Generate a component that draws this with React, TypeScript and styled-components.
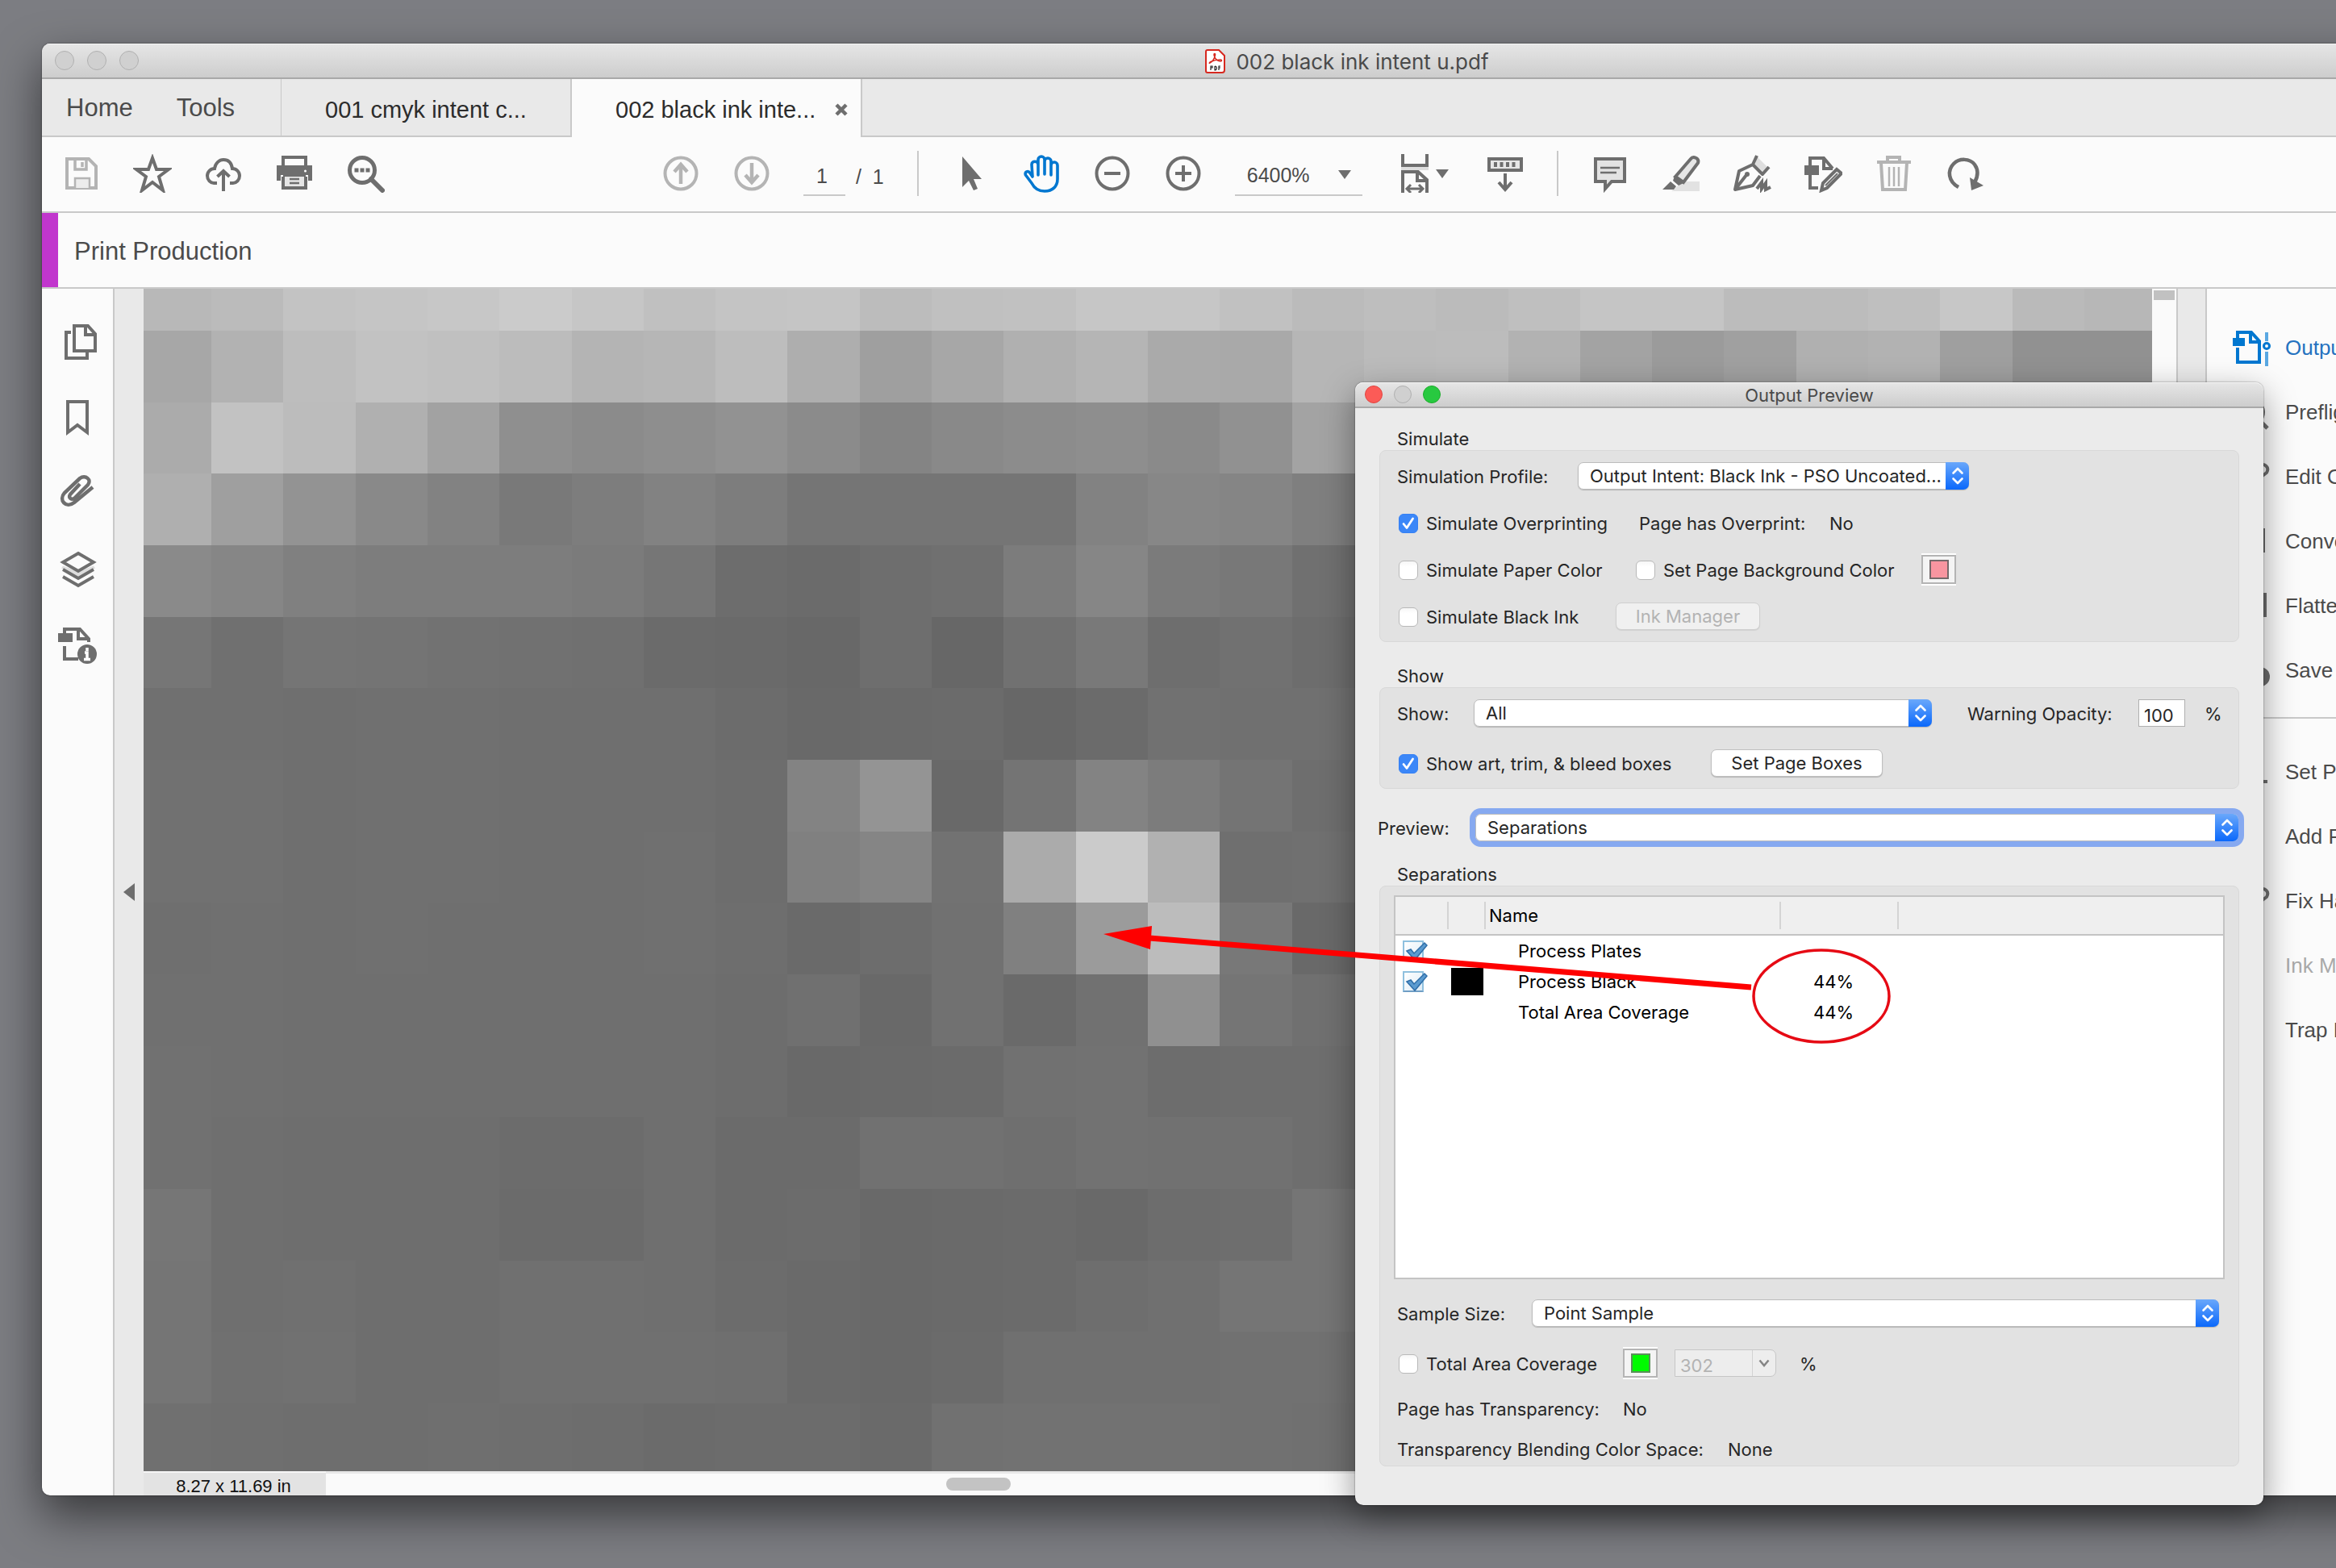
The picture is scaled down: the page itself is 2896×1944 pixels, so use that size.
import React from "react";
import styled, { createGlobalStyle, css } from "styled-components";

const ui = `Inter, Roboto, "Liberation Sans", sans-serif`;
const helv = `"Liberation Sans", Arial, sans-serif`;
const ink = "#6e6e6e";
const faded = "#b4b4b4";
const accent = "#0077d0";
const line = "#c9c9c9";

const GlobalStyle = createGlobalStyle`
  *, *::before, *::after { box-sizing: border-box; }
  html, body { margin: 0; padding: 0; overflow: hidden; }
  body { font-family: ${ui}; background: #7c7d82; }
  button, input, select { font: inherit; color: inherit; margin: 0; }
`;

/* ---------- desktop and main window ---------- */

const Desktop = styled.div`
  position: relative;
  display: flex;
  height: 100vh;
  padding: 54px 0 90px 52px;
  overflow: hidden;
  background: #7c7d82;
`;

/* The window runs on past the right edge of the screen. */
const Window = styled.main`
  flex: 1;
  min-width: 0;
  margin-right: -392px;
  display: flex;
  flex-direction: column;
  border-radius: 10px;
  overflow: hidden;
  background: #fbfbfb;
  box-shadow: 0 0 2px rgba(0, 0, 0, 0.6), 0 24px 56px rgba(0, 0, 0, 0.55);
`;

const TitleBar = styled.header`
  position: relative;
  flex: none;
  display: flex;
  align-items: center;
  justify-content: center;
  gap: 13px;
  height: 44px;
  padding-top: 2px;
  background: linear-gradient(#e6e6e6, #cdcdcd);
  border-bottom: 2px solid #a9a9a9;
  box-shadow: inset 0 1px 0 #f4f4f4;
  color: #4a4a4a;
  font-size: 26px;
`;

const Lights = styled.div<{ $left: number; $gap: number }>`
  position: absolute;
  left: ${(p) => p.$left}px;
  top: 0;
  bottom: 0;
  display: flex;
  align-items: center;
  gap: ${(p) => p.$gap}px;
`;

const Light = styled.button<{ $fill?: string; $edge?: string; $size: number }>`
  width: ${(p) => p.$size}px;
  height: ${(p) => p.$size}px;
  padding: 0;
  border-radius: 50%;
  background: ${(p) => p.$fill || "#d0d0d0"};
  border: 1px solid ${(p) => p.$edge || "#b0b0b0"};
`;

const Tabs = styled.nav`
  flex: none;
  display: flex;
  height: 72px;
  background: #e9e9e9;
`;

const tabEdge = css`
  border-bottom: 2px solid ${line};
`;

const HomeTabs = styled.div`
  ${tabEdge}
  display: flex;
  align-items: center;
  gap: 54px;
  width: 297px;
  padding: 2px 0 0 30px;
  border-right: 1px solid ${line};
`;

const PlainTab = styled.button`
  border: 0;
  padding: 0;
  background: none;
  color: #4b4b4b;
  font: 31px/36px ${helv};
`;

const DocTab = styled.div<{ $active?: boolean }>`
  display: flex;
  align-items: center;
  gap: 24px;
  width: 360px;
  padding: 6px 0 0 54px;
  border-right: 2px solid ${line};
  ${(p) => (p.$active ? "background: #fbfbfb; padding-bottom: 2px;" : tabEdge)}
`;

const DocTabName = styled.button`
  border: 0;
  padding: 0;
  background: none;
  color: #2c2c2c;
  white-space: nowrap;
  font: 29px/34px ${helv};
`;

const CloseTab = styled.button`
  display: flex;
  border: 0;
  padding: 0;
  background: none;
`;

const TabFiller = styled.div`
  ${tabEdge}
  flex: 1;
`;

/* ---------- toolbar ---------- */

const Toolbar = styled.div`
  flex: none;
  display: flex;
  align-items: center;
  height: 94px;
  padding: 0 0 2px 5px;
  border-bottom: 2px solid ${line};
  background: #fbfbfb;
  color: #4b4b4b;
  font: 25px/30px ${helv};
`;

const ToolGroup = styled.div<{ $ml?: number }>`
  display: flex;
  align-items: center;
  margin-left: ${(p) => p.$ml || 0}px;
`;

const Tool = styled.button<{ $tone?: string; $w?: number }>`
  display: flex;
  align-items: center;
  justify-content: center;
  gap: 8px;
  width: ${(p) => p.$w || 88}px;
  height: 88px;
  padding: 0;
  border: 0;
  background: none;
  color: ${(p) => p.$tone || ink};
`;

const Divider = styled.span<{ $ml: number }>`
  width: 2px;
  height: 56px;
  margin: 0 20px 0 ${(p) => p.$ml}px;
  background: ${line};
`;

const underlined = css`
  height: 56px;
  border: 0;
  border-bottom: 2px solid ${line};
  border-radius: 0;
  background: none;
  outline: none;
`;

const PageInput = styled.input`
  ${underlined}
  width: 52px;
  padding: 8px 6px 0 0;
  text-align: center;
`;

const PageCount = styled.span`
  margin-left: 13px;
  padding-top: 8px;
`;

const ZoomBox = styled.div`
  position: relative;
  margin-left: 20px;
  display: flex;
  align-items: center;
`;

const ZoomSelect = styled.select`
  ${underlined}
  appearance: none;
  width: 158px;
  padding: 6px 0 0 15px;
`;

const OverCaret = styled.span`
  position: absolute;
  right: 14px;
  top: 24px;
  display: flex;
  color: ${ink};
  pointer-events: none;
`;

const Production = styled.section`
  flex: none;
  display: flex;
  align-items: center;
  height: 94px;
  padding: 2px 0 0 20px;
  border-left: 20px solid #c136cd;
  position: relative;
  color: #4b4b4b;
  &::after {
    content: "";
    position: absolute;
    left: -20px;
    right: 0;
    bottom: 0;
    height: 2px;
    background: ${line};
  }
`;

const ProductionTitle = styled.h1`
  margin: 0;
  font: 400 31px/36px ${helv};
`;

/* ---------- work area ---------- */

const Work = styled.div`
  flex: 1;
  min-height: 0;
  display: flex;
`;

const Rail = styled.aside`
  flex: none;
  width: 90px;
  padding: 19px 2px 0 0;
  border-right: 2px solid ${line};
`;

const RailButton = styled.button`
  display: flex;
  align-items: center;
  justify-content: center;
  width: 88px;
  height: 94px;
  padding: 0;
  border: 0;
  background: none;
  color: ${ink};
`;

const Gutter = styled.button`
  flex: none;
  display: flex;
  align-items: center;
  justify-content: center;
  width: 36px;
  padding: 0;
  border: 0;
  background: #e9e9e9;
  color: ${ink};
`;

const Doc = styled.section`
  flex: 1;
  min-width: 0;
  display: flex;
  flex-direction: column;
`;

const Pixels = styled.div`
  flex: 1;
  min-height: 0;
  display: grid;
  grid-template-columns: 84px repeat(26, 1fr) 84px;
  grid-template-rows: 52px repeat(15, 1fr) 84px;
`;

const Status = styled.footer`
  flex: none;
  display: flex;
  height: 30px;
`;

const PageSize = styled.span`
  width: 226px;
  padding: 4px 3px 0 0;
  border-top: 2px solid #f6f6f6;
  text-align: center;
  background: #e3e3e3;
  color: #111;
  font: 22px/26px ${helv};
`;

const Track = styled.div`
  flex: 1;
  padding: 5px 0 0 769px;
  border-top: 3px solid #e8e8e8;
  background: #fafafa;
`;

const Thumb = styled.div`
  width: 80px;
  height: 16px;
  border-radius: 8px;
  background: #c3c3c3;
`;

const VScroll = styled.div`
  flex: none;
  width: 32px;
  padding: 2px;
  border-right: 2px solid ${line};
  background: #fafafa;
`;

const VThumb = styled.div`
  width: 26px;
  height: 12px;
  background: #c1c1c1;
`;

const RightGap = styled.div`
  flex: none;
  width: 36px;
  background: #e9e9e9;
  border-right: 2px solid ${line};
`;

const ToolPanel = styled.aside`
  flex: none;
  width: 552px;
  padding-top: 33px;
`;

const PanelItem = styled.button<{ $tone?: string; $iconTone?: string }>`
  display: flex;
  align-items: center;
  gap: 18px;
  width: 100%;
  height: 80px;
  padding: 0 0 0 31px;
  border: 0;
  background: none;
  text-align: left;
  white-space: nowrap;
  color: ${(p) => p.$tone || "#4b4b4b"};
  font: 26px/30px ${helv};
  svg {
    color: ${(p) => p.$iconTone || ink};
  }
`;

const PanelRule = styled.hr`
  height: 2px;
  margin: 18px 0 26px;
  border: 0;
  background: ${line};
`;

/* ---------- Output Preview dialog ---------- */

const Dialog = styled.section`
  position: absolute;
  top: 474px;
  right: 90px;
  width: 1126px;
  border-radius: 10px;
  background: #ebebeb;
  color: #262626;
  font: 22px/26px ${ui};
  box-shadow: 0 0 2px rgba(0, 0, 0, 0.55), 0 14px 40px rgba(0, 0, 0, 0.4);
`;

const DialogTitle = styled(TitleBar)`
  height: 32px;
  border-radius: 10px 10px 0 0;
  font-size: 22px;
`;

const Body = styled.div`
  padding: 0 30px 48px;
`;

const Group = styled.fieldset<{ $top: number }>`
  margin: ${(p) => p.$top}px 0 0;
  padding: 0;
  border: 0;
  min-width: 0;
`;

const Legend = styled.legend`
  height: 27px;
  padding: 0 0 0 22px;
`;

const Box = styled.div<{ $gap: number; $bottom: number }>`
  display: flex;
  flex-direction: column;
  gap: ${(p) => p.$gap}px;
  padding: 11px 21px ${(p) => p.$bottom}px;
  border: 1px solid #d8d8d8;
  border-radius: 8px;
  background: #e2e2e2;
`;

const Row = styled.div`
  display: flex;
  align-items: center;
  height: 40px;
`;

/* Starts a little left of the groups above and below it. */
const PreviewRow = styled(Row)`
  margin: 28px 1px 0 -2px;
`;

const SampleRow = styled(Row)`
  padding-right: 3px;
`;

const TextRow = styled(Row)`
  height: 28px;
`;

const FieldLabel = styled.label<{ $w: number; $ml?: number }>`
  flex: none;
  width: ${(p) => p.$w}px;
  margin-left: ${(p) => p.$ml || 0}px;
  padding-top: 2px;
`;

const CheckLabel = styled.label<{ $w: number }>`
  flex: none;
  display: flex;
  align-items: center;
  gap: 10px;
  width: ${(p) => p.$w}px;
  padding: 2px 0 0 2px;
`;

const CheckWrap = styled.span`
  position: relative;
  display: flex;
  svg {
    position: absolute;
    inset: 0;
    pointer-events: none;
    overflow: visible;
  }
`;

const CheckInput = styled.input`
  appearance: none;
  width: 24px;
  height: 24px;
  border: 1px solid #b9b9b9;
  border-radius: 6px;
  background: linear-gradient(#f6f6f6, #fff 30%);
  &:checked {
    border-color: #3580f4;
    background: #3b87f8;
  }
`;

const PopupWrap = styled.span<{ $w?: number; $focus?: boolean }>`
  position: relative;
  display: flex;
  ${(p) => (p.$w ? `flex: none; width: ${p.$w}px;` : "flex: 1;")}
  height: 34px;
  border-radius: 7px;
  box-shadow: ${(p) => (p.$focus ? "0 0 0 7px #86a9f0" : "0 1px 1px rgba(0, 0, 0, 0.2)")};
`;

const Popup = styled.select`
  appearance: none;
  width: 100%;
  height: 34px;
  padding: 0 30px 0 14px;
  border: 1px solid #bcbcbc;
  border-radius: 7px;
  background: #fff;
  outline: none;
`;

const Stepper = styled.span`
  position: absolute;
  top: 0;
  right: 0;
  display: flex;
  align-items: center;
  justify-content: center;
  width: 29px;
  height: 34px;
  border-radius: 0 7px 7px 0;
  background: linear-gradient(#6aa8fb, #0a68fb);
  pointer-events: none;
`;

const PushButton = styled.button<{ $w: number }>`
  width: ${(p) => p.$w}px;
  height: 34px;
  padding: 0;
  border: 1px solid #c0c0c0;
  border-radius: 7px;
  background: #fff;
  box-shadow: 0 1px 1px rgba(0, 0, 0, 0.2);
  &:disabled {
    background: #f0f0f0;
    border-color: #cfcfcf;
    color: #b3b3b3;
    box-shadow: 0 1px 1px rgba(0, 0, 0, 0.08);
  }
`;

const Swatch = styled.button<{ $fill: string; $edge: string }>`
  display: flex;
  align-items: center;
  justify-content: center;
  width: 43px;
  height: 36px;
  padding: 0;
  border: 2px solid #b4b4b4;
  box-shadow: 0 -2px 0 #fff, 0 2px 0 #fff;
  background: #f4f4f4;
  &::before {
    content: "";
    width: 24px;
    height: 24px;
    border: 2px solid ${(p) => p.$edge};
    background: ${(p) => p.$fill};
  }
`;

const NumberInput = styled.input`
  width: 58px;
  height: 34px;
  margin-right: 24px;
  padding: 5px 0 0 6px;
  border: 1px solid #b0b0b0;
  background: #fff;
  outline: none;
`;

const Combo = styled.span`
  display: flex;
  width: 126px;
  height: 34px;
  margin: 0 29px 0 21px;
  border: 1px solid #c6c6c6;
  border-radius: 0 7px 7px 0;
  background: #ededed;
  color: #b3b3b3;
`;

const ComboInput = styled.input`
  width: 96px;
  padding: 5px 0 0 6px;
  border: 0;
  border-right: 1px solid #d2d2d2;
  background: none;
  color: #b3b3b3;
`;

const ComboButton = styled.button`
  flex: 1;
  display: flex;
  align-items: center;
  justify-content: center;
  padding: 0;
  border: 0;
  background: none;
  color: #858585;
`;

const TableBox = styled.div`
  min-height: 476px;
  margin: 0 -4px;
  border: 2px solid #c4c4c4;
  background: #fff;
  color: #000;
`;

const Plates = styled.table`
  width: 100%;
  border-collapse: separate;
  border-spacing: 0;
  table-layout: fixed;
  th {
    height: 48px;
    padding: 6px 0;
    font-weight: 400;
    text-align: left;
    background: #efefef;
    border-bottom: 2px solid #c4c4c4;
  }
  td {
    height: 38px;
    padding: 0;
  }
`;

const HeadCell = styled.span<{ $last?: boolean }>`
  display: flex;
  align-items: center;
  height: 34px;
  padding-left: 4px;
  border-right: ${(p) => (p.$last ? "0" : "2px solid #d4d4d4")};
`;

const PlateText = styled.span`
  display: block;
  padding-left: 40px;
`;

const PlateTick = styled(CheckWrap)`
  width: 26px;
  margin-left: 9px;
`;

const PlateInput = styled.input`
  appearance: none;
  width: 26px;
  height: 26px;
  border: 2px solid #8fc0de;
  border-bottom-color: #6f9dc4;
  background: linear-gradient(135deg, #fff, #dcebf6);
`;

const InkSwatch = styled.span`
  display: block;
  width: 40px;
  height: 34px;
  margin-left: 3px;
  background: #000;
`;

const Marks = styled.svg`
  position: absolute;
  left: -320px;
  top: 660px;
  width: 1000px;
  height: 180px;
  pointer-events: none;
`;

/* ---------- drawings ---------- */

const IconSvg = styled.svg`
  flex: none;
`;

const Icon = ({ children, w = 48 }: { children: React.ReactNode; w?: number }) => (
  <IconSvg
    width={w}
    height={48}
    viewBox={`0 0 ${w} 48`}
    fill="none"
    stroke="currentColor"
    strokeWidth={4}
    aria-hidden="true"
  >
    {children}
  </IconSvg>
);

const Caret = () => (
  <svg width="16" height="11" viewBox="0 0 16 11" aria-hidden="true">
    <path d="M0 0h16l-8 11z" fill="currentColor" />
  </svg>
);

const Tick = () => (
  <svg width="24" height="24" viewBox="0 0 24 24" fill="none" aria-hidden="true">
    <path d="M6 12.5l4 5L17.5 6" stroke="#fff" strokeWidth="2.8" strokeLinecap="round" strokeLinejoin="round" />
  </svg>
);

const BlueTick = () => (
  <svg width="26" height="26" viewBox="0 0 26 26" fill="none" aria-hidden="true">
    <path d="M5 13l5-2 4 5L27 3l3 3-15 18z" fill="#5b9bd0" stroke="#2f6ea8" strokeWidth="1.5" />
  </svg>
);

const Arrows = () => (
  <svg width="16" height="24" viewBox="0 0 16 24" fill="none" stroke="#fff" strokeWidth="2.6" aria-hidden="true">
    <path d="M2.500 8.500L8 3l5.500 5.500M2.500 15.500L8 21l5.500-5.500" strokeLinecap="round" strokeLinejoin="round" />
  </svg>
);

const PdfIcon = () => (
  <svg width="25" height="30" viewBox="0 0 25 30" fill="none" aria-hidden="true">
    <path d="M3 1h14l7 7v18a3 3 0 0 1-3 3H3a2 2 0 0 1-2-2V3a2 2 0 0 1 2-2z" fill="#fff" stroke="#d6281f" strokeWidth="2" />
    <path
      d="M6 17c3-1 6-6 6.500-10 .2-2-1.500-2-1.500 0 .5 4 4 8 8 8 2 0 2-2 0-2-4 0-9 1-12 2.500-2 1-2 2.500-1 1.500z"
      stroke="#d6281f"
      strokeWidth="1.600"
    />
    <path d="M7 26v-5h2v2H7M12 21v5c3 0 3-5 0-5M17 26v-5h2M17 23h2" stroke="#222" strokeWidth="1.200" />
  </svg>
);

const SaveIcon = () => (
  <Icon>
    <path d="M6 6h27l9 9v27H6z" />
    <path d="M16 6v13h14V6M25 10v6" strokeWidth="3.500" />
    <path d="M16 42V30h18v12" fill="#ececec" strokeWidth="2.500" />
  </Icon>
);
const StarIcon = () => (
  <Icon>
    <path d="M24 5l5 14h15L32 28l5 17-13-10-13 10 5-17L4 19h15z" />
  </Icon>
);
const CloudIcon = () => (
  <Icon>
    <path d="M16 36h-4c-4 0-8-4-8-9s4-9 9-9c1-7 6-11 11-11 6 0 10 4 11 11 5 0 9 4 9 9s-4 9-8 9h-4" />
    <path d="M24 46V24M16.500 28l7.500-7 7.500 7" />
  </Icon>
);
const PrintIcon = () => (
  <Icon>
    <path d="M10 16V4h28v12" />
    <path d="M2 14h44v19h-5V26H7v7H2z" fill="currentColor" stroke="none" />
    <path d="M10 28v14h28V28" fill="#e6e6e6" />
    <path d="M10 26h28" />
    <path d="M18 31h12M18 36h12" strokeWidth="2.500" />
    <circle cx="37.500" cy="21" r="1.500" fill="#fff" stroke="none" />
  </Icon>
);
const SearchIcon = () => (
  <Icon>
    <circle cx="20" cy="20" r="15.500" strokeWidth="5" />
    <path d="M31 31l14 14" strokeWidth="6" strokeLinecap="round" />
    <path d="M10.500 20h5M17.500 20h5M24.500 20h5" strokeWidth="5" />
  </Icon>
);
const CircleIcon = ({ d, w = 4 }: { d: string; w?: number }) => (
  <Icon>
    <circle cx="24" cy="24" r="19.500" />
    <path d={d} strokeWidth={w} />
  </Icon>
);
const PointerIcon = () => (
  <Icon>
    <path d="M14 3v38l8-8 6 12 5-2-5-12h10z" fill="currentColor" stroke="none" />
  </Icon>
);
const HandIcon = () => (
  <Icon>
    <path
      strokeLinejoin="round"
      strokeLinecap="round"
      strokeWidth="3.600"
      d="M20 26V13M20 13V7a4 4 0 0 1 8 0v18M28 9a4 4 0 0 1 8 0v17M36 14a4 4 0 0 1 8 0v17c0 9-6 15-16 15-8 0-13-4-16-10L4.500 26c-1.500-4 3-6 5.500-2.500l3 4.500-1-15c0-5 8-5 8 0"
    />
  </Icon>
);
const FitIcon = () => (
  <Icon w={36}>
    <path d="M3 0v14h30V0" />
    <path d="M1 18h34" stroke="#dedede" />
    <path d="M3 48V22h19l11 10v16M21 22v11h11" />
    <path d="M9 43h18M13 38l-5 5 5 5M23 38l5 5-5 5" strokeWidth="3" />
  </Icon>
);
const KeyboardIcon = () => (
  <Icon>
    <rect x="4" y="6" width="40" height="14" fill="#e6e6e6" />
    <path d="M10 13h28" strokeWidth="6" strokeDasharray="4 3.500" />
    <path d="M24 24v20M16 35l8 9 8-9" />
  </Icon>
);
const CommentIcon = () => (
  <Icon>
    <path d="M6 6h36v28H26l-8 9v-9H6z" fill="#e3e3e3" />
    <path d="M12 17h24M12 23h20" strokeWidth="2.500" />
  </Icon>
);
const MarkerIcon = () => (
  <Icon>
    <path d="M22 38l4-4h21v12H12z" fill="#e2e2e2" stroke="none" />
    <path d="M17 28L36 6c3-4 11-1 9 5L27 35z" fill="#e6e6e6" />
    <path d="M16 27l11 9-6 3-7-6zM11 34l7 6-3 4H1z" fill="currentColor" stroke="none" />
  </Icon>
);
const PenIcon = () => (
  <Icon>
    <path d="M30 3l14 14-6 5-10-9z" fill="#dedede" stroke="none" />
    <path d="M30 2l-5 11 12 12 8-9M25 13L8 21 3 44l22-5 9-12M3 44l14-18" strokeLinejoin="round" />
    <circle cx="18" cy="25" r="3" fill="currentColor" stroke="none" />
    <path d="M30 43l6-8v8l5-7v8l6-3" />
  </Icon>
);
const DocPenIcon = () => (
  <Icon>
    <path d="M8 14V5h17l11 13M25 5v13h11M8 26v16h10" />
    <rect x="1" y="14" width="18" height="12" fill="currentColor" stroke="none" />
    <path d="M22 45l2-9 17-17 6 5-18 18z" fill="#fbfbfb" strokeWidth="4" />
    <path d="M27 39l15-15" strokeWidth="2" />
  </Icon>
);
const TrashIcon = () => (
  <Icon>
    <path d="M3 10h42M16 9V4h15v5M8 11l2 33h28l2-33" />
    <path d="M18 16v24M24 16v24M30 16v24" strokeWidth="2.500" />
  </Icon>
);
const RedoIcon = () => (
  <Icon>
    <path d="M16 41C3 34 2 20 10 12c7-7 20-7 26 1 5 7 4 15 0 22" strokeWidth="4.500" />
    <path d="M30 29l17 10-15 6z" fill="currentColor" stroke="none" />
  </Icon>
);

const PagesIcon = () => (
  <Icon>
    <path d="M16 12h-6v32h26v-7" />
    <path d="M20 4h17l9 10v21H20z" fill="#fbfbfb" />
    <path d="M34 4v11h12" />
  </Icon>
);
const BookmarkIcon = () => (
  <Icon>
    <path d="M12 4h24v38l-12-9-12 9z" />
  </Icon>
);
const ClipIcon = () => (
  <Icon>
    <path d="M27 12L15 25c-3 4 2 8 6 4l16-16c5-6-3-13-10-8L8 23c-8 9 2 20 12 12l23-19" strokeWidth="4.500" />
  </Icon>
);
const LayersIcon = () => (
  <Icon>
    <path d="M25 26.500l19-7 2 3-21 12-21-12 2-3z" fill="#dedede" stroke="none" />
    <path d="M25 4l19 11-19 11L6 15zM6 24l19 11 19-11M6 33l19 11 19-11" strokeWidth="3.800" />
  </Icon>
);
const InfoDocIcon = () => (
  <Icon>
    <path d="M8 10V4h19l11 12v4M25 4v12h13M8 25v16h17" />
    <rect x="0" y="9" width="18" height="11" fill="currentColor" stroke="none" />
    <circle cx="36" cy="35" r="12" fill="currentColor" stroke="none" />
    <path d="M36 27v4M33 33h3v8M32 41.500h8" stroke="#fff" strokeWidth="3.500" />
  </Icon>
);
const OutputIcon = () => (
  <Icon>
    <path d="M7 12V5h17l10 11v26H7V24M23 5v12h11" />
    <rect x="1" y="12" width="15" height="10" fill="currentColor" stroke="none" />
    <path d="M43 5v11M43 29v18" stroke="#5aa8e2" />
    <circle cx="43" cy="22" r="3.500" strokeWidth="3" />
  </Icon>
);
const LensIcon = () => (
  <Icon>
    <circle cx="24" cy="24" r="15" />
    <path d="M34 34l10 10" strokeWidth="5" />
  </Icon>
);
const PencilIcon = () => (
  <Icon>
    <path d="M8 40l3-12 24-18c5-3 12 2 8 9L18 38z" />
  </Icon>
);
const SheetIcon = ({ w = 36 }: { w?: number }) => (
  <Icon>
    <rect x="4" y="10" width={w} height="26" />
  </Icon>
);
const DiscIcon = () => (
  <Icon>
    <circle cx="35" cy="32" r="12" fill="currentColor" stroke="none" />
    <path d="M6 4h24v14M6 4v36h14" />
  </Icon>
);
const CropIcon = () => (
  <Icon>
    <path d="M10 2v34h34M2 10h28v34" />
  </Icon>
);

/* ---------- magnified page samples, one grey level per source pixel ---------- */

const samples = [
  "b8 bb c3 c5 c7 cb c6 c0 c4 c5 bc c0 c1 c6 c6 c1 bb be bb bf c5 c5 bc bc bf c7 ba b7",
  "a7 b2 bd c2 c0 bc b4 b6 bd ae 9f a7 b0 b5 aa a9 b6 bb bc b2 a3 9b a0 b0 b2 9f 91 91",
  "ab c2 bc b0 a2 8f 8b 8e 92 8b 84 89 8c 8e 8a 91 a3",
  "af 9f 93 89 82 79 7d 82 7d 75 75 75 75 82 87 85 7f",
  "8a 86 80 7d 7d 7d 7b 76 6d 6b 6e 70 7c 86 7b 78 70",
  "76 70 75 74 72 71 70 6b 6a 68 6e 67 71 79 6e 71 6d",
  "70 70 6f 70 70 6f 6f 6f 6c 69 6a 6b 67 6b 71 70 70",
  "71 71 6f 70 70 6f 6f 6f 6d 83 94 69 74 83 7c 74 6e",
  "71 71 6f 70 70 6f 6f 70 6d 80 85 72 ab cb b1 6f 70",
  "6f 70 6f 70 6f 6f 6f 70 6e 6a 6d 71 80 9b bc 78 69",
  "70 70 6f 6f 6f 6f 6f 6f 6d 70 69 71 6a 71 90 75 70",
  "71 70 6f 6f 6f 6f 6f 6f 6d 69 6a 6b 71 72 6d 6e 6e",
  "71 6f 6e 6e 6e 6c 6c 6f 6b 6b 71 71 6f 72 71 71 6e",
  "76 6f 6e 6e 6e 6b 6b 6f 6b 6c 69 6a 6b 69 6d 6e 75",
  "75 6f 70 6e 6e 70 70 6f 6c 6a 69 6a 6b 6e 70 75 75",
  "75 70 71 6e 6e 70 70 70 6f 6a 69 6b 70 70 70 71 71",
  "70 6f 6e 6e 6f 6e 6d 6b 6c 6c 6a 71 72 72 72 71 70",
].map((row) => {
  const tones = row.split(" ");
  return Array.from({ length: 28 }, (_, i) => tones[Math.min(i, tones.length - 1)]);
});

const leftTools: [string, React.ReactNode, string?][] = [
  ["Save", <SaveIcon />, faded],
  ["Favourite", <StarIcon />],
  ["Upload", <CloudIcon />],
  ["Print", <PrintIcon />],
  ["Find", <SearchIcon />],
];

const viewTools: [string, React.ReactNode, string?][] = [
  ["Select", <PointerIcon />],
  ["Pan", <HandIcon />, accent],
  ["Zoom out", <CircleIcon d="M14 24h20" />],
  ["Zoom in", <CircleIcon d="M14 24h20M24 14v20" />],
];

const editTools: [string, React.ReactNode, string?][] = [
  ["Comment", <CommentIcon />],
  ["Highlight", <MarkerIcon />],
  ["Sign", <PenIcon />],
  ["Edit", <DocPenIcon />],
  ["Delete", <TrashIcon />, faded],
  ["Rotate", <RedoIcon />],
];

const railTools: [string, React.ReactNode][] = [
  ["Page thumbnails", <PagesIcon />],
  ["Bookmarks", <BookmarkIcon />],
  ["Attachments", <ClipIcon />],
  ["Layers", <LayersIcon />],
  ["Standards", <InfoDocIcon />],
];

const ToolList = ({ items, ml }: { items: [string, React.ReactNode, string?][]; ml?: number }) => (
  <ToolGroup $ml={ml}>
    {items.map(([name, icon, tone]) => (
      <Tool key={name} aria-label={name} $tone={tone}>
        {icon}
      </Tool>
    ))}
  </ToolGroup>
);

const Check = ({ label, w, checked }: { label: string; w: number; checked?: boolean }) => (
  <CheckLabel $w={w}>
    <CheckWrap>
      <CheckInput type="checkbox" defaultChecked={checked} />
      {checked && <Tick />}
    </CheckWrap>
    {label}
  </CheckLabel>
);

const PopupField = ({ id, value, w, focus }: { id: string; value: string; w?: number; focus?: boolean }) => (
  <PopupWrap $w={w} $focus={focus}>
    <Popup id={id} defaultValue={value}>
      <option>{value}</option>
    </Popup>
    <Stepper>
      <Arrows />
    </Stepper>
  </PopupWrap>
);

const plates = [
  { name: "Process Plates", on: true, value: "" },
  { name: "Process Black", on: true, swatch: true, value: "44%" },
  { name: "Total Area Coverage", value: "44%" },
];

const columnWidths = [66, 46, 366, 146];

const OutputPreview = () => (
  <Dialog role="dialog" aria-label="Output Preview">
    <DialogTitle>
      <Lights $left={12} $gap={14}>
        <Light aria-label="Close" $size={22} $fill="#fc5b57" $edge="#e2443f" />
        <Light aria-label="Minimise" $size={22} />
        <Light aria-label="Zoom" $size={22} $fill="#28c940" $edge="#1dad2b" />
      </Lights>
      Output Preview
    </DialogTitle>
    <Body>
      <Group $top={25}>
        <Legend>Simulate</Legend>
        <Box $gap={18} $bottom={11}>
          <Row>
            <FieldLabel $w={224} htmlFor="profile">Simulation Profile:</FieldLabel>
            <PopupField id="profile" value="Output Intent: Black Ink - PSO Uncoated..." w={485} />
          </Row>
          <Row>
            <Check label="Simulate Overprinting" w={300} checked />
            <FieldLabel as="span" $w={236}>Page has Overprint:</FieldLabel>
            <FieldLabel as="span" $w={40}>No</FieldLabel>
          </Row>
          <Row>
            <Check label="Simulate Paper Color" w={294} />
            <Check label="Set Page Background Color" w={356} />
            <Swatch aria-label="Page background color" $fill="#f895a0" $edge="#75696b" />
          </Row>
          <Row>
            <Check label="Simulate Black Ink" w={271} />
            <PushButton $w={179} disabled>Ink Manager</PushButton>
          </Row>
        </Box>
      </Group>

      <Group $top={29}>
        <Legend>Show</Legend>
        <Box $gap={22} $bottom={11}>
          <Row>
            <FieldLabel $w={95} htmlFor="show">Show:</FieldLabel>
            <PopupField id="show" value="All" w={568} />
            <FieldLabel $w={212} $ml={44} htmlFor="opacity">Warning Opacity:</FieldLabel>
            <NumberInput id="opacity" defaultValue="100" />
            <FieldLabel as="span" $w={20}>%</FieldLabel>
          </Row>
          <Row>
            <Check label="Show art, trim, & bleed boxes" w={389} checked />
            <PushButton $w={213}>Set Page Boxes</PushButton>
          </Row>
        </Box>
      </Group>

      <PreviewRow>
        <FieldLabel $w={121} htmlFor="preview">Preview:</FieldLabel>
        <PopupField id="preview" value="Separations" focus />
      </PreviewRow>

      <Group $top={25}>
        <Legend>Separations</Legend>
        <Box $gap={22} $bottom={7}>
          <TableBox>
            <Plates>
              <colgroup>
                {columnWidths.map((w, i) => (
                  <col key={i} style={{ width: w }} />
                ))}
                <col />
              </colgroup>
              <thead>
                <tr>
                  <th><HeadCell /></th>
                  <th><HeadCell /></th>
                  <th><HeadCell>Name</HeadCell></th>
                  <th><HeadCell /></th>
                  <th><HeadCell $last /></th>
                </tr>
              </thead>
              <tbody>
                {plates.map((p) => (
                  <tr key={p.name}>
                    <td>
                      {p.on && (
                        <PlateTick>
                          <PlateInput type="checkbox" defaultChecked aria-label={p.name} />
                          <BlueTick />
                        </PlateTick>
                      )}
                    </td>
                    <td>{p.swatch && <InkSwatch />}</td>
                    <td><PlateText>{p.name}</PlateText></td>
                    <td><PlateText>{p.value}</PlateText></td>
                    <td />
                  </tr>
                ))}
              </tbody>
            </Plates>
          </TableBox>
          <SampleRow>
            <FieldLabel $w={167} htmlFor="sample">Sample Size:</FieldLabel>
            <PopupField id="sample" value="Point Sample" />
          </SampleRow>
          <Row>
            <Check label="Total Area Coverage" w={280} />
            <Swatch aria-label="Coverage color" $fill="#00fb00" $edge="#5b8f5b" />
            <Combo>
              <ComboInput aria-label="Coverage limit" defaultValue="302" disabled />
              <ComboButton aria-label="Choose limit" disabled>
                <svg width="14" height="10" viewBox="0 0 14 10" fill="none" stroke="currentColor" strokeWidth="2.500">
                  <path d="M1.500 1.500L7 8l5.500-6.500" />
                </svg>
              </ComboButton>
            </Combo>
            <FieldLabel as="span" $w={20}>%</FieldLabel>
          </Row>
          <TextRow>
            <FieldLabel as="span" $w={280}>Page has Transparency:</FieldLabel>
            <FieldLabel as="span" $w={40}>No</FieldLabel>
          </TextRow>
          <TextRow>
            <FieldLabel as="span" $w={410}>Transparency Blending Color Space:</FieldLabel>
            <FieldLabel as="span" $w={80}>None</FieldLabel>
          </TextRow>
        </Box>
      </Group>
    </Body>
    <Marks viewBox="1360 1134 1000 180" aria-hidden="true">
      <path d="M1425 1163L2171 1224" stroke="#fe0000" strokeWidth="7" />
      <path d="M1368 1158l60-10-2 29z" fill="#fe0000" />
      <ellipse cx="2258" cy="1235" rx="84" ry="57" fill="none" stroke="#e60a14" strokeWidth="3.500" />
    </Marks>
  </Dialog>
);

export default function App() {
  return (
    <Desktop>
      <GlobalStyle />
      <Window>
        <TitleBar>
          <Lights $left={16} $gap={16}>
            <Light aria-label="Close" $size={24} />
            <Light aria-label="Minimise" $size={24} />
            <Light aria-label="Zoom" $size={24} />
          </Lights>
          <PdfIcon />
          002 black ink intent u.pdf
        </TitleBar>

        <Tabs>
          <HomeTabs>
            <PlainTab>Home</PlainTab>
            <PlainTab>Tools</PlainTab>
          </HomeTabs>
          <DocTab>
            <DocTabName>001 cmyk intent c...</DocTabName>
          </DocTab>
          <DocTab $active>
            <DocTabName>002 black ink inte...</DocTabName>
            <CloseTab aria-label="Close tab">
              <svg width="16" height="16" viewBox="0 0 16 16" stroke={ink} strokeWidth="4.500">
                <path d="M2 2l12 12M14 2L2 14" />
              </svg>
            </CloseTab>
          </DocTab>
          <TabFiller />
        </Tabs>

        <Toolbar>
          <ToolList items={leftTools} />
          <ToolGroup $ml={303}>
            <Tool aria-label="Previous page" $tone={faded}>
              <CircleIcon d="M24 37V14M16 22l8-9 8 9" w={4.5} />
            </Tool>
            <Tool aria-label="Next page" $tone={faded}>
              <CircleIcon d="M24 11v23M16 26l8 9 8-9" w={4.5} />
            </Tool>
          </ToolGroup>
          <ToolGroup $ml={20}>
            <PageInput aria-label="Page number" defaultValue="1" />
            <PageCount>/&nbsp; 1</PageCount>
          </ToolGroup>
          <Divider $ml={41} />
          <ToolList items={viewTools} />
          <ZoomBox>
            <ZoomSelect aria-label="Zoom level" defaultValue="6400%">
              <option>6400%</option>
            </ZoomSelect>
            <OverCaret>
              <Caret />
            </OverCaret>
          </ZoomBox>
          <ToolGroup $ml={21}>
            <Tool $w={112} aria-label="Fit width">
              <FitIcon />
              <Caret />
            </Tool>
            <Tool aria-label="Touch keyboard">
              <KeyboardIcon />
            </Tool>
          </ToolGroup>
          <Divider $ml={20} />
          <ToolList items={editTools} />
        </Toolbar>

        <Production>
          <ProductionTitle>Print Production</ProductionTitle>
        </Production>

        <Work>
          <Rail>
            {railTools.map(([name, icon]) => (
              <RailButton key={name} aria-label={name}>
                {icon}
              </RailButton>
            ))}
          </Rail>
          <Gutter aria-label="Collapse navigation">
            <svg width="14" height="22" viewBox="0 0 14 22">
              <path d="M14 0v22L0 11z" fill="currentColor" />
            </svg>
          </Gutter>
          <Doc>
            <Pixels>
              {samples.flatMap((row, y) =>
                row.map((tone, x) => <span key={`${y}-${x}`} style={{ background: `#${tone}${tone}${tone}` }} />)
              )}
            </Pixels>
            <Status>
              <PageSize>8.27 x 11.69 in</PageSize>
              <Track>
                <Thumb />
              </Track>
            </Status>
          </Doc>
          <VScroll>
            <VThumb />
          </VScroll>
          <RightGap />
          <ToolPanel>
            <PanelItem $tone="#2472c0" $iconTone={accent}><OutputIcon />Output Preview</PanelItem>
            <PanelItem><LensIcon />Preflight</PanelItem>
            <PanelItem><PencilIcon />Edit Object</PanelItem>
            <PanelItem><SheetIcon w={35} />Convert Colors</PanelItem>
            <PanelItem><SheetIcon w={37} />Flattener Preview</PanelItem>
            <PanelItem><DiscIcon />Save as PDF/X</PanelItem>
            <PanelRule />
            <PanelItem><CropIcon />Set Page Boxes</PanelItem>
            <PanelItem><SheetIcon w={30} />Add Printer Marks</PanelItem>
            <PanelItem><PencilIcon />Fix Hairlines</PanelItem>
            <PanelItem $tone="#a9a9a9" $iconTone={faded}><SheetIcon w={30} />Ink Manager</PanelItem>
            <PanelItem><SheetIcon w={30} />Trap Presets</PanelItem>
          </ToolPanel>
        </Work>
      </Window>
      <OutputPreview />
    </Desktop>
  );
}
